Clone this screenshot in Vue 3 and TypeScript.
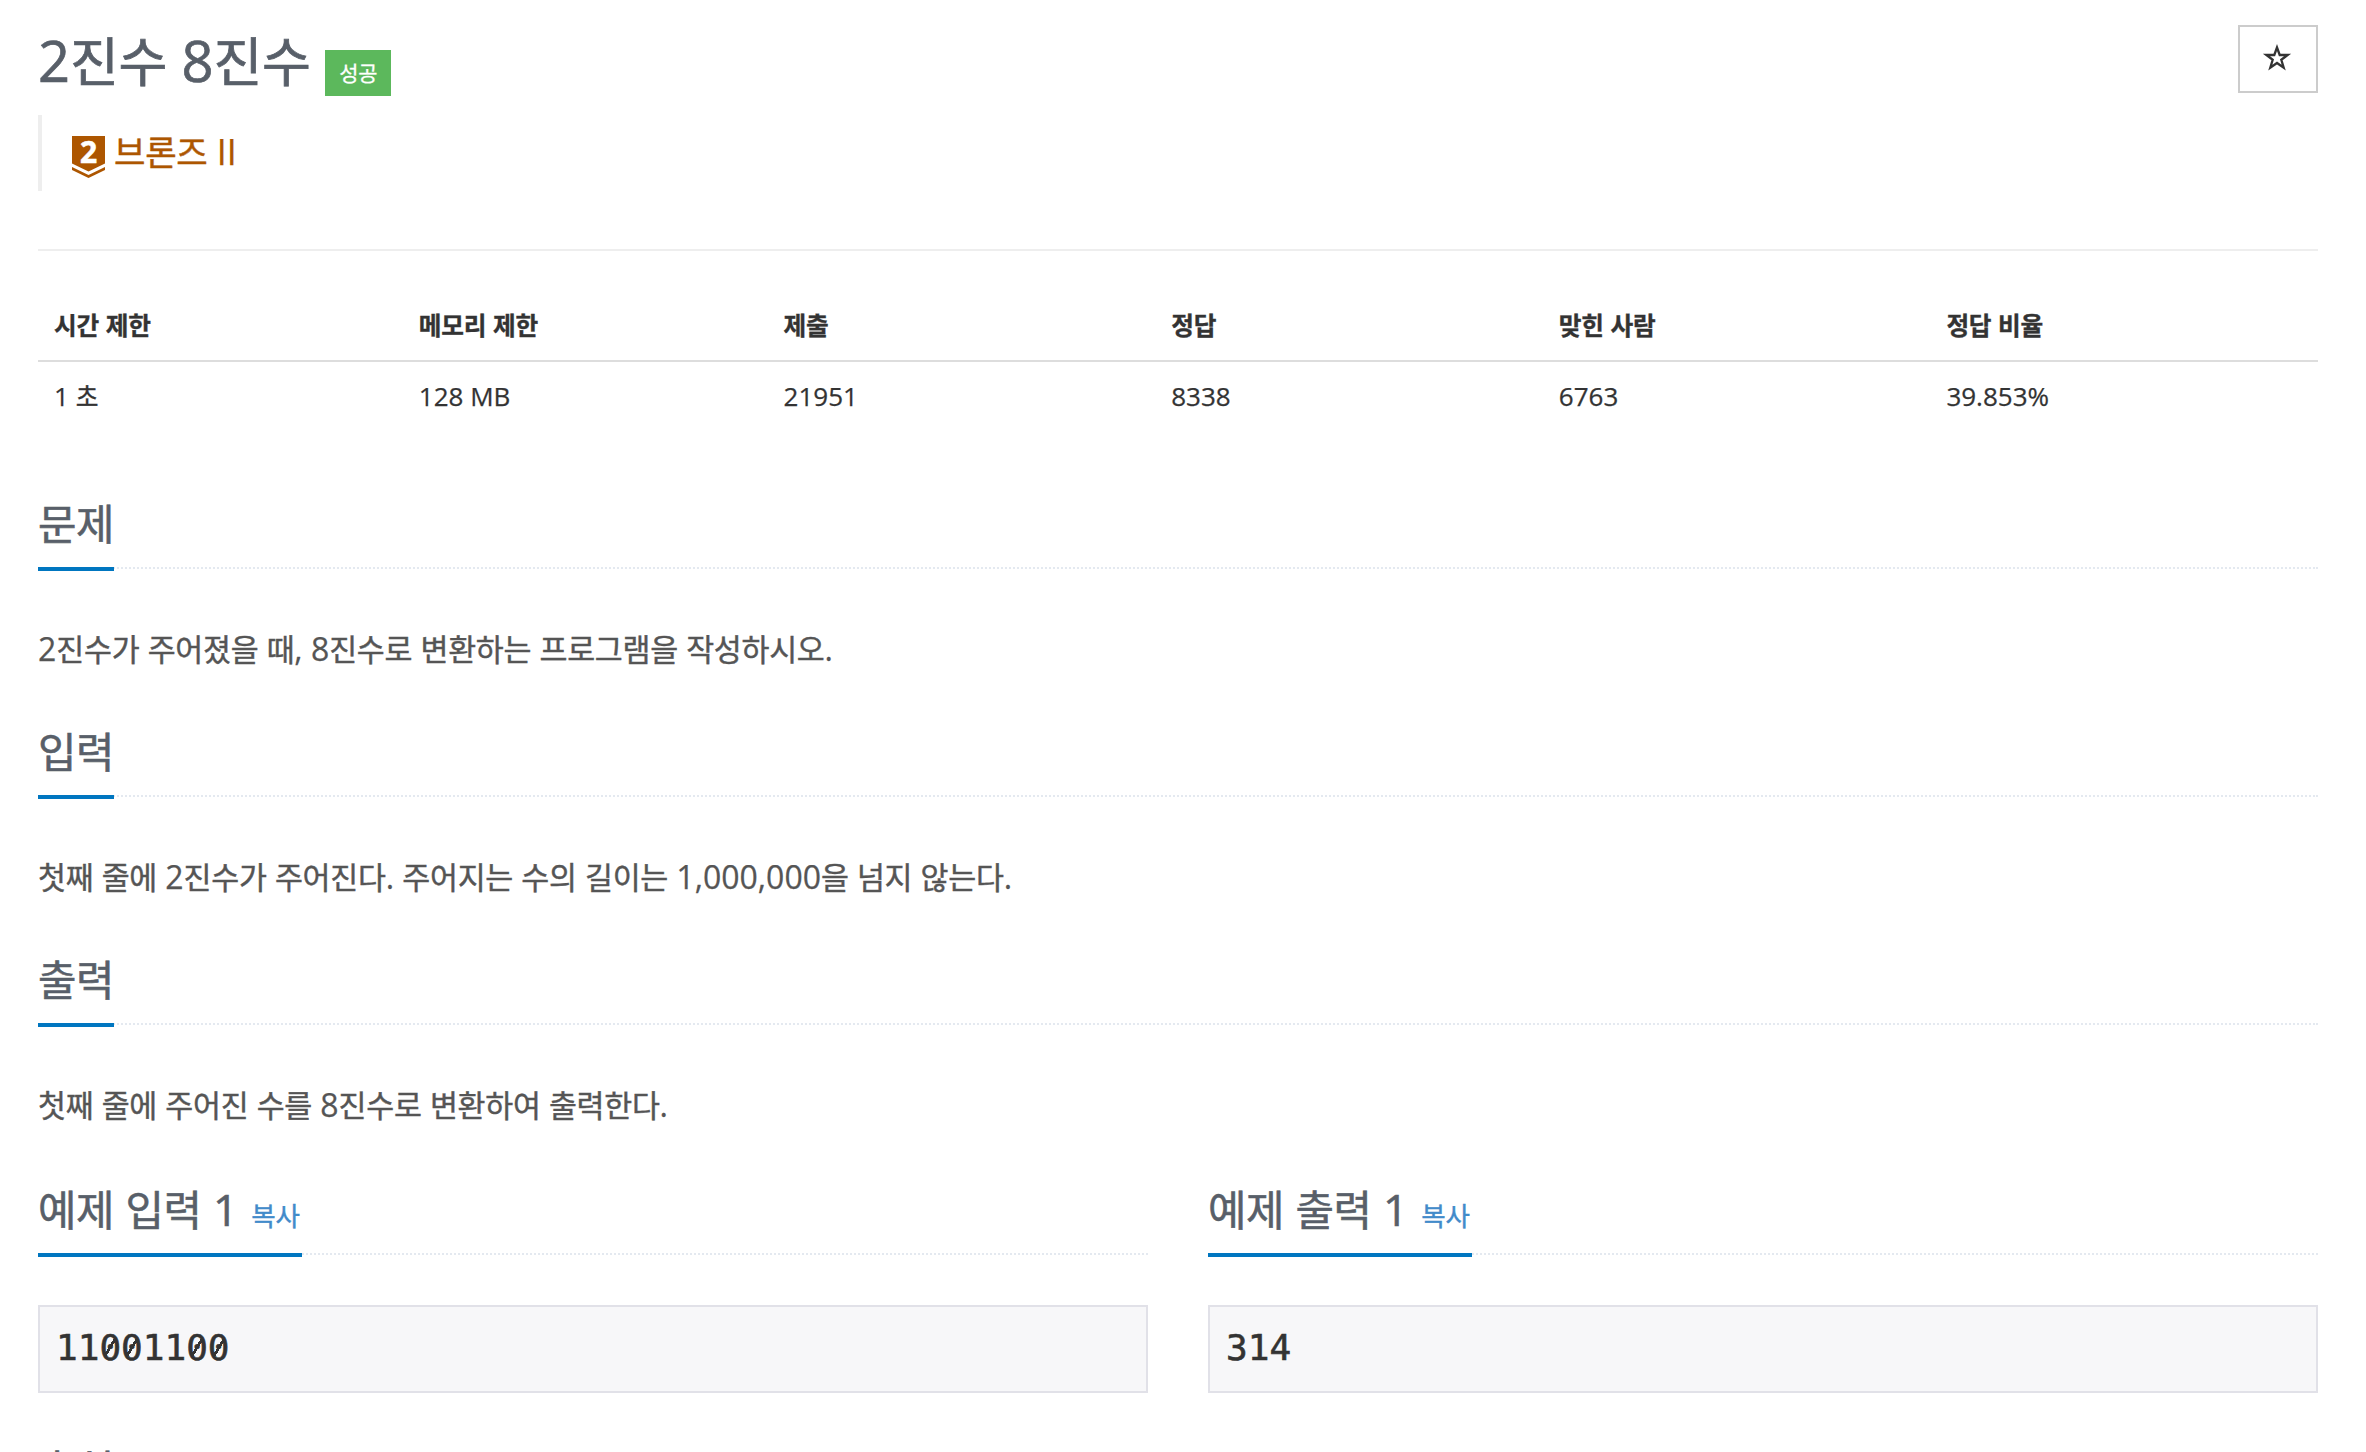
<script setup lang="ts">
import { h, type FunctionalComponent } from 'vue'

interface Stat { label: string; value: string; wide: boolean }
interface Section { title: string; body: string }
interface Sample { title: string; data: string }

// Splits mixed text so that Hangul and Latin runs can be sized separately.
const Mixed: FunctionalComponent<{ text: string }> = (props) =>
  (props.text.match(/[\uAC00-\uD7A3]+|[^\uAC00-\uD7A3]+/g) ?? []).map((run) =>
    /[\uAC00-\uD7A3]/.test(run) ? h('span', { class: 'ko' }, run) : run,
  )
Mixed.props = ['text']

const stats: Stat[] = [
  { label: '시간 제한', value: '1 초', wide: false },
  { label: '메모리 제한', value: '128 MB', wide: false },
  { label: '제출', value: '21951', wide: true },
  { label: '정답', value: '8338', wide: true },
  { label: '맞힌 사람', value: '6763', wide: true },
  { label: '정답 비율', value: '39.853%', wide: true },
]

const sections: Section[] = [
  { title: '문제', body: '2진수가 주어졌을 때, 8진수로 변환하는 프로그램을 작성하시오.' },
  { title: '입력', body: '첫째 줄에 2진수가 주어진다. 주어지는 수의 길이는 1,000,000을 넘지 않는다.' },
  { title: '출력', body: '첫째 줄에 주어진 수를 8진수로 변환하여 출력한다.' },
]

const samples: Sample[] = [
  { title: '예제 입력 1', data: '11001100' },
  { title: '예제 출력 1', data: '314' },
]
</script>

<template>
  <main class="page">
    <header class="top">
      <h1 class="title"><Mixed text="2진수 8진수" /></h1>
      <span class="badge"><Mixed text="성공" /></span>
      <button class="star" aria-label="즐겨찾기">
        <svg width="30" height="28" viewBox="0 0 30 28">
          <path d="M15 3.5 L17.7 11 H25.7 L19.3 15.8 L21.7 23.7 L15 19 L8.3 23.7 L10.7 15.8 L4.3 11 H12.3 Z" fill="none" stroke="#333" stroke-width="2.3" />
        </svg>
      </button>
    </header>

    <blockquote class="tier">
      <svg class="tier-icon" width="33" height="42" viewBox="0 0 33 42">
        <path d="M0 0 H33 V27.5 L16.5 35.5 L0 27.5 Z M0 31 L16.5 39 L33 31 V34 L16.5 42 L0 34 Z" fill="#ad5600" />
        <text x="16.5" y="26.5" text-anchor="middle" class="tier-num">2</text>
      </svg>
      <span><Mixed text="브론즈 II" /></span>
    </blockquote>

    <hr class="rule" />

    <table class="stats">
      <thead>
        <tr>
          <th v-for="s in stats" :key="s.label" :class="{ wide: s.wide }"><Mixed :text="s.label" /></th>
        </tr>
      </thead>
      <tbody>
        <tr>
          <td v-for="s in stats" :key="s.label"><Mixed :text="s.value" /></td>
        </tr>
      </tbody>
    </table>

    <section v-for="s in sections" :key="s.title" class="section">
      <div class="headline"><h2><Mixed :text="s.title" /></h2></div>
      <p><Mixed :text="s.body" /></p>
    </section>

    <div class="samples">
      <section v-for="s in samples" :key="s.title" class="sample">
        <div class="headline">
          <h2><Mixed :text="s.title" /><a class="copy"><Mixed text="복사" /></a></h2>
        </div>
        <pre><span v-for="(c, i) in s.data" :key="i" :class="{ zero: c === '0' }">{{ c }}</span></pre>
      </section>
    </div>

    <div class="headline"><h2><Mixed text="출처" /></h2></div>
  </main>
</template>

<style>
body {
  background: #fff;
}
.ko {
  font-family: "Noto Sans CJK KR", sans-serif;
  font-size: 0.95em;
  letter-spacing: -0.0095em;
  line-height: 1;
  -webkit-text-stroke: 0.014em currentColor;
}
</style>

<style scoped>
.page {
  box-sizing: border-box;
  height: 1452px;
  overflow: hidden;
  padding: 25px 48px 0 38px;
  font-family: "Open Sans", "Noto Sans CJK KR", sans-serif;
  color: #333;
  white-space: nowrap;
  -webkit-text-stroke: 0.25px currentColor;
}
.top {
  display: flex;
  align-items: flex-start;
  height: 90px;
}
.title {
  margin: 0;
  font-size: 56px;
  line-height: 70px;
  font-weight: 400;
  color: #585f69;
  -webkit-text-stroke: 0.7px currentColor;
}
.badge {
  box-sizing: border-box;
  width: 66px;
  height: 46px;
  margin: 25px 0 0 15px;
  background: #5cb85c;
  color: #fff;
  font-size: 22px;
  line-height: 45px;
  text-align: center;
}
.star {
  box-sizing: border-box;
  display: flex;
  align-items: center;
  justify-content: center;
  width: 80px;
  height: 68px;
  margin-left: auto;
  padding: 0 2px 3px 0;
  border: 2px solid #ccc;
  background: #fff;
}
.tier {
  box-sizing: border-box;
  display: flex;
  height: 76px;
  margin: 0;
  padding-left: 30px;
  border-left: 4px solid #eee;
  color: #ad5600;
  font-size: 36px;
  line-height: 73px;
}
.tier-icon {
  margin: 21px 9px 0 0;
}
.tier-num {
  font: 700 30px "Open Sans", sans-serif;
  fill: #fff;
  stroke: #fff;
  stroke-width: 0.6px;
}
.rule {
  height: 2px;
  margin: 58px 0 0;
  border: 0;
  background: #eee;
}
.stats {
  width: 100%;
  margin-top: 41px;
  border-collapse: separate;
  border-spacing: 0;
  table-layout: fixed;
  font-size: 26px;
}
.stats th,
.stats td {
  box-sizing: border-box;
  padding: 0 16px 3px;
  text-align: left;
}
.stats th {
  width: 16%;
  height: 70px;
  border-bottom: 2px solid #ddd;
  font-weight: 700;
  -webkit-text-stroke: 0;
}
.stats th.wide {
  width: 17%;
}
.stats td {
  height: 70px;
}
.section {
  height: 228px;
}
.stats + .section {
  margin-top: 63px;
}
.headline {
  height: 72px;
  border-bottom: 2px dotted #e4e9f0;
}
.headline h2 {
  box-sizing: border-box;
  display: inline-block;
  height: 76px;
  margin: 0;
  border-bottom: 4px solid #0076c0;
  color: #585f69;
  font-size: 44px;
  line-height: 57px;
  font-weight: 400;
  vertical-align: top;
  -webkit-text-stroke: 0.6px currentColor;
}
.copy {
  margin-left: 13px;
  margin-right: 2px;
  color: #428bca;
  font-size: 28px;
}
.section p {
  margin: 52px 0 0;
  color: #555;
  font-size: 32px;
  line-height: 56px;
}
.samples {
  display: grid;
  grid-template-columns: 1110px 1110px;
  column-gap: 60px;
  height: 260px;
  margin-top: 2px;
}
pre {
  box-sizing: border-box;
  height: 88px;
  margin: 50px 0 0;
  padding: 0 16px;
  border: 2px solid #e1e1e8;
  background: #f7f7f9;
  color: #333;
  font: 36px/82px "DejaVu Sans Mono", monospace;
  -webkit-text-stroke: 0.6px currentColor;
}
/* Slashed zero */
.zero {
  background: linear-gradient(to bottom right, transparent 42%, #333 42% 58%, transparent 58%) 50% 12px / 10px 17px no-repeat;
}
</style>
